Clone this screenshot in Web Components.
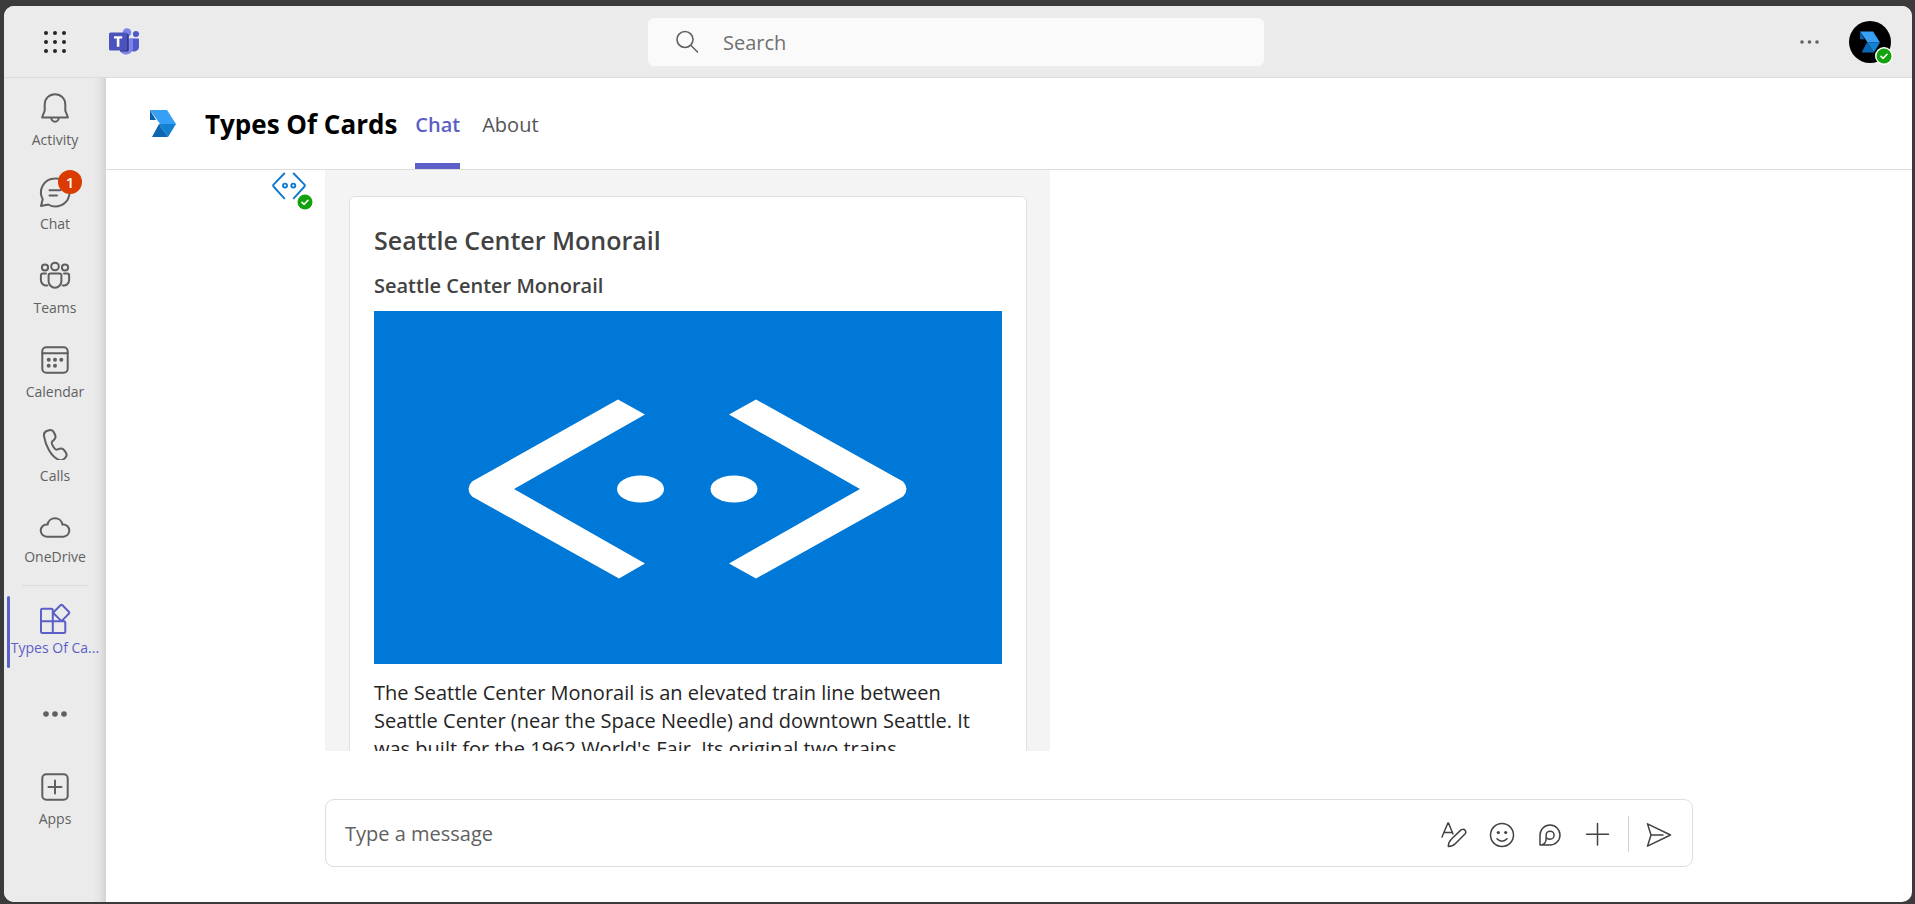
<!DOCTYPE html>
<html lang="en">
<head>
<meta charset="utf-8">
<title>Types Of Cards</title>
<style>
  html, body { margin: 0; height: 100%; }
  body { font-family: "Open Sans", "Noto Sans", sans-serif; color: #242424; background: #3b3b3b; }
</style>
</head>
<body>
<teams-shell>
  <top-bar slot="top"></top-bar>
  <side-rail slot="rail">
    <rail-item icon="bell">Activity</rail-item>
    <rail-item icon="chat" badge="1">Chat</rail-item>
    <rail-item icon="people">Teams</rail-item>
    <rail-item icon="calendar">Calendar</rail-item>
    <rail-item icon="phone">Calls</rail-item>
    <rail-item icon="cloud" compact>OneDrive</rail-item>
    <rail-item icon="tiles" active compact>Types Of Ca...</rail-item>
    <rail-more></rail-more>
    <rail-item icon="apps">Apps</rail-item>
  </side-rail>
  <app-header heading="Types Of Cards">
    <tab-link selected>Chat</tab-link>
    <tab-link>About</tab-link>
  </app-header>
  <chat-thread>
    <hero-card heading="Seattle Center Monorail" subheading="Seattle Center Monorail">The Seattle Center Monorail is an elevated train line between Seattle Center (near the Space Needle) and downtown Seattle. It was built for the 1962 World's Fair. Its original two trains</hero-card>
  </chat-thread>
  <message-composer></message-composer>
</teams-shell>

<script>
const ARROW = '<path d="M0 0h17l9 14H10z" fill="#37a0f4"/><path d="M0 0v10h6z" fill="#0b60a8"/><path d="M9 14h17l-8 13z" fill="#1380d2"/><path d="M9 14 2 27h16z" fill="#0c67b3"/>';
const ICONS = {
  waffle: [24, 24, [3, 12, 21].map(y => [3, 12, 21].map(x => `<circle cx="${x}" cy="${y}" r="2" fill="#242424"/>`).join('')).join('')],
  teams: [30, 27, '<circle cx="18" cy="4.500" r="4.300" fill="#7b83eb"/><circle cx="27" cy="6" r="3.100" fill="#5059c9"/><path d="M21 10.500h8.200c.5 0 .8.300.8.800v7.200a5 5 0 0 1-9 3z" fill="#5059c9"/><path d="M11 10.500h12.200c.5 0 .8.300.8.800V20a7 7 0 0 1-13 3z" fill="#7b83eb"/><path d="M18 5.500c1 0 1.800.8 1.800 1.800V22c0 .8-.7 1.500-1.500 1.500h-7.200L11 7z" fill="#37398a"/><rect y="4.500" width="18" height="18" rx="1.600" fill="#4b53bc"/><path d="M5 8.300h8.200v2.300h-2.800v8.200H7.800v-8.200H5z" fill="#fff"/>'],
  search: [24, 24, '<g fill="none" stroke="#616161" stroke-width="1.600" stroke-linecap="round"><circle cx="10" cy="9.500" r="8"/><path d="m15.800 15.200 6.700 6.800"/></g>'],
  dots: [20, 6, '<g fill="#616161"><circle cx="3" cy="3" r="1.800"/><circle cx="10.500" cy="3" r="1.800"/><circle cx="18" cy="3" r="1.800"/></g>'],
  more: [26, 6, '<g fill="#5f5f5f" stroke="none"><circle cx="4" cy="3" r="2.800"/><circle cx="13" cy="3" r="2.800"/><circle cx="22" cy="3" r="2.800"/></g>'],
  arrow: [26, 27, ARROW],
  bell: [32, 32, '<path d="M16 2.200c-5.800 0-10.300 4.500-10.300 10.200v6.300L3.200 25v.6h25.600V25l-2.500-6.300v-6.300C26.300 6.700 21.800 2.200 16 2.200zM12.300 26a3.700 3.700 0 0 0 7.400 0"/>'],
  chat: [32, 32, '<path d="M16 2.500a14 14 0 0 0-12.300 20.700L2 30l7.300-1.500A14 14 0 1 0 16 2.500zM10.500 14.200h11M10.500 19.500h7.500"/>'],
  people: [32, 32, '<circle cx="16" cy="6.500" r="3.800"/><circle cx="6" cy="7.500" r="3.100"/><circle cx="26" cy="7.500" r="3.100"/><path d="M11.500 13.400h9c1.100 0 1.900.8 1.900 1.900v6a6.400 6.400 0 0 1-12.800 0v-6c0-1.100.8-1.900 1.900-1.900zM7 13.400H3.700c-1 0-1.800.8-1.800 1.800v5.100a5.300 5.300 0 0 0 6.500 5.100M25 13.400h3.300c1 0 1.800.8 1.800 1.800v5.100a5.300 5.300 0 0 1-6.500 5.100"/>'],
  calendar: [32, 32, '<rect x="3.300" y="3.300" width="25.400" height="25.400" rx="4"/><path d="M3.300 9.300h25.400"/><g fill="#5f5f5f" stroke="none"><circle cx="9.700" cy="15.700" r="2"/><circle cx="16" cy="15.700" r="2"/><circle cx="22.300" cy="15.700" r="2"/><circle cx="9.700" cy="21.700" r="2"/><circle cx="16" cy="21.700" r="2"/></g>'],
  phone: [32, 32, '<path d="m8.400 2.800 1.700-.5c2-.6 4 .3 4.900 2.200l1.100 2.500c.7 1.600.3 3.500-1 4.700l-2.100 2c-.9.900.3 3.300 1.200 4.900 1 1.700 2.400 3.300 3.600 3l2.800-.9c1.700-.5 3.500.1 4.500 1.500l1.600 2.200c1.200 1.700 1 4-.5 5.300l-1.200 1.200c-1.300 1.200-3.200 1.600-4.900 1-4.200-1.500-7.500-5.200-10.200-9.900C7.100 17.100 5.700 12.500 5 8.200c-.4-2.500 1-4.700 3.400-5.400z"/>'],
  cloud: [32, 32, '<path d="M8.600 12.500a7.500 7.500 0 0 1 14.800 0h.8a6.100 6.100 0 0 1 0 12.200H7.800a6.100 6.100 0 0 1 0-12.200z"/>'],
  tiles: [32, 32, '<path d="M13.800 18.300V7.200c0-.8-.6-1.400-1.400-1.400H3.400c-.8 0-1.400.6-1.400 1.400v21.500c0 .8.600 1.400 1.400 1.400h21.500c.8 0 1.400-.6 1.400-1.400v-9c0-.8-.6-1.400-1.400-1.400zM2 18.300h11.800v11.800M21.500 2.200l-6.500 6.500c-.6.600-.6 1.400 0 2l6.500 6.400c.6.600 1.400.6 2 0l6.300-6.400c.6-.6.600-1.400 0-2L23.500 2.200c-.6-.6-1.400-.6-2 0z"/>'],
  apps: [32, 32, '<rect x="3.300" y="3.300" width="25.400" height="25.400" rx="4"/><path d="M16 9.500v13M9.500 16h13"/>'],
  bot: [34, 28, '<g fill="none" stroke="#0f78cf" stroke-width="1.900"><path d="M12.300 1.500 1.500 12.700c-.5.600-.5 1.200 0 1.800l10.800 11.800M21.700 1.500l10.800 11.200c.5.600.5 1.200 0 1.800L21.700 26.300"/><circle cx="13" cy="13.600" r="2"/><circle cx="21.300" cy="13.600" r="2"/></g>'],
  check: [16, 16, '<circle cx="8" cy="8" r="7.500" fill="#13a10e"/><path d="m5 8.300 2.200 2L11 6.300" fill="none" stroke="#fff" stroke-width="1.600" stroke-linecap="round"/>'],
  format: [26, 26, '<path d="m1 15 5.900-14h.6l4.500 11M3 10.500h8.200M21 7.600a2.700 2.700 0 0 1 3.200 4.100L14.500 21.500c-1.900 1.900-4.500 3-7.200 3 0-2.700 1.100-5.300 3-7.200L20 7.900q.4-.3 1-.3z"/>'],
  smile: [26, 26, '<circle cx="13" cy="13" r="11.500"/><path d="M8 16.800c2.800 3.100 7.200 3.100 10 0"/><g fill="#424242" stroke="none"><circle cx="9.300" cy="10.500" r="1.600"/><circle cx="16.700" cy="10.500" r="1.600"/></g>'],
  loop: [26, 26, '<path d="M3 23V13A10 10 0 1 1 13 23zM5.500 22.500c2.500-.5 3.400-2.300 3.600-5.500v-3.800a4 4 0 1 1 4 4c-1.400 0-2.300-.4-2.900-.9"/>'],
  plus: [26, 26, '<path d="M12.500 1.500V23M1.500 12.200h22"/>'],
  send: [26, 26, '<path d="m1.500 1.800 23 11.200-23 11.200L5 13zM5 13h12"/>']
};

/* Registers an element whose shadow root is cloned from a template built by render(host). */
function element(name, render) {
  customElements.define(name, class extends HTMLElement {
    connectedCallback() {
      if (this.shadowRoot) return;
      const t = document.createElement('template');
      t.innerHTML = render(this);
      this.attachShadow({ mode: 'open' }).append(t.content.cloneNode(true));
    }
  });
}

element('ui-icon', el => {
  const [w, h, body] = ICONS[el.getAttribute('name')];
  return `<style>:host{display:block;flex:none;width:${w}px;height:${h}px}svg{display:block}</style>
  <svg width="${w}" height="${h}" viewBox="0 0 ${w} ${h}" aria-hidden="true" fill="none" stroke="none"><g style="stroke:var(--icon-stroke,none);stroke-width:var(--icon-weight,2);stroke-linejoin:round;stroke-linecap:round">${body}</g></svg>`;
});

element('teams-shell', () => `<style>
  :host{display:block;box-sizing:border-box;height:100vh;padding:6px 3px 2px 4px}
  .window{height:100%;display:grid;grid-template:72px minmax(0,1fr)/102px minmax(0,1fr);border-radius:10px;overflow:hidden;background:#fff}
  main{display:flex;flex-direction:column;min-width:0;min-height:0}
  </style><div class="window"><slot name="top"></slot><slot name="rail"></slot><main><slot></slot></main></div>`);

element('top-bar', () => `<style>
  :host{grid-column:1/-1;display:grid;grid-template-columns:minmax(0,1fr) minmax(0,616px) minmax(0,1fr);align-items:center;box-sizing:border-box;padding-right:4px;border-bottom:1px solid #dcdcdc;background:#ebebeb}
  button{display:block;padding:0;border:0;background:none}
  .start{display:flex;align-items:center;gap:42px;padding-left:39px}
  .end{display:flex;align-items:center;justify-content:flex-end;gap:30px;padding-right:17px}
  label{display:flex;align-items:center;gap:24px;height:48px;padding:0 0 0 27px;box-sizing:border-box;border-radius:6px;background:#fafafa}
  input{flex:1;min-width:0;padding:2px 0 0;border:0;outline:0;background:none;font:20px/28px "Open Sans",sans-serif}
  input::placeholder{color:#707070;opacity:1}
  .me{position:relative;display:grid;place-items:center;width:42px;height:42px;border-radius:50%;background:#000}
  .me svg{display:block}
  .status{position:absolute;right:-1px;bottom:-1px;border-radius:50%;background:#fff;box-shadow:0 0 0 1px #fff}
  </style>
  <div class="start"><button aria-label="App launcher"><ui-icon name="waffle"></ui-icon></button><ui-icon name="teams"></ui-icon></div>
  <label><ui-icon name="search"></ui-icon><input type="search" placeholder="Search" aria-label="Search"></label>
  <div class="end"><button aria-label="Settings and more"><ui-icon name="dots"></ui-icon></button>
  <button class="me" aria-label="Account"><svg width="20" height="22" viewBox="0 0 26 27">${ARROW}</svg><ui-icon class="status" name="check"></ui-icon></button></div>`);

element('side-rail', () => `<style>
  :host{display:block;min-height:0;overflow:hidden;background:linear-gradient(to left,#d3d3d3,#e3e3e3 6px,#ebebeb 14px)}
  nav{display:flex;flex-direction:column;padding-top:4px}
  </style><nav aria-label="Apps"><slot></slot></nav>`);

element('rail-item', el => {
  const active = el.hasAttribute('active');
  const badge = el.getAttribute('badge');
  return `<style>
  :host{display:block;height:84px;--icon-stroke:#5f5f5f;color:#616161}
  :host([compact]){--gap:3px}
  :host([active]){height:72px;margin-top:10px;--icon-stroke:#5b5fc7;color:#5b5fc7;--pad:7px}
  a{position:relative;display:flex;flex-direction:column;align-items:center;gap:var(--gap,6px);height:100%;box-sizing:border-box;padding-top:var(--pad,10px);color:inherit;text-decoration:none;font-size:14px;line-height:20px;white-space:nowrap}
  .bar{position:absolute;left:3px;top:0;bottom:0;width:3px;border-radius:2px;background:#5b5fc7}
  .badge{position:absolute;left:54px;top:4px;width:24px;height:24px;border-radius:50%;background:#da3b01;color:#fff;font-size:15px;font-weight:600;line-height:24px;text-align:center}
  hr{width:66px;margin:-1px auto 0;border:0;border-top:1px solid #dcdcdc}
  </style><a href="#">${active ? '<span class="bar"></span>' : ''}<ui-icon name="${el.getAttribute('icon')}"></ui-icon>${badge ? `<span class="badge">${badge}</span>` : ''}<span><slot></slot></span></a>${el.getAttribute('icon') === 'cloud' ? '<hr>' : ''}`;
});

element('rail-more', () => `<style>
  :host{display:block;margin:26px 0 27px}
  button{display:grid;place-items:center;width:100%;height:40px;padding:0;border:0;background:none}
  </style><button aria-label="More apps"><ui-icon name="more"></ui-icon></button>`);

element('app-header', el => `<style>
  :host{flex:none;display:flex;height:91px;border-bottom:1px solid #dcdcdc;align-items:center;padding-left:44px}
  h1{margin:0 18px 0 29px;font-size:26px;line-height:36px;font-weight:700;color:#000;white-space:nowrap}
  nav{display:flex;gap:22px;align-self:stretch}
  </style><ui-icon name="arrow"></ui-icon><h1>${el.getAttribute('heading')}</h1><nav><slot></slot></nav>`);

element('tab-link', () => `<style>
  :host{display:flex}
  a{display:flex;align-items:center;box-sizing:border-box;border:solid transparent;border-width:8px 0 6px;color:#545454;font-size:20px;line-height:28px;text-decoration:none}
  :host([selected]) a{color:#5b5fc7;font-weight:600;border-bottom-color:#5b5fc7}
  </style><a href="#"><slot></slot></a>`);

element('chat-thread', () => `<style>
  :host{flex:1;min-height:0;overflow:hidden;display:grid;grid-template-columns:minmax(54px,1fr) minmax(0,1368px) minmax(0,1fr)}
  .bot{position:relative;justify-self:end;align-self:start;padding:2px 19px 0 0}
  .bot .status{position:absolute;right:12px;top:24px}
  .bubble{box-sizing:border-box;max-width:725px;padding:26px 23px 26px 24px;background:#f4f4f4}
  </style><div class="bot"><ui-icon name="bot"></ui-icon><ui-icon class="status" name="check"></ui-icon></div><div class="bubble"><slot></slot></div>`);

element('hero-card', el => `<style>
  :host{display:block;border:1px solid #e0e0e0;border-radius:6px;background:#fff;padding:25px 24px}
  h2,h3,p{margin:0}
  h2{font-size:25px;line-height:36px;font-weight:600;color:#424242}
  h3{margin-top:14px;font-size:20px;line-height:28px;font-weight:600;color:#424242}
  svg{display:block;width:100%;margin:11px 0 15px}
  p{font-size:20px;line-height:28px;color:#242424}
  </style><h2>${el.getAttribute('heading')}</h2><h3>${el.getAttribute('subheading')}</h3>
  <svg viewBox="0 0 628 353" role="img" aria-label="Bot Framework logo"><rect width="628" height="353" fill="#0078d7"/>
  <g fill="#fff"><path d="m244 88.500 27 15-131 74.500 131 74.500-26 15L98 185.500q-7-7.500 0-15z"/><path d="m382 88.500-27 15 131 74.500-131 74.500 27 15 147-82q7-7.500 0-15z"/><ellipse cx="266.500" cy="178" rx="23.500" ry="13.500"/><ellipse cx="360" cy="178" rx="23.500" ry="13.500"/></g></svg>
  <p><slot></slot></p>`);

element('message-composer', () => `<style>
  :host{flex:none;display:grid;grid-template-columns:minmax(54px,1fr) minmax(0,1368px) minmax(0,1fr);padding:48px 0 35px;--icon-stroke:#424242;--icon-weight:1.5}
  form{grid-column:2;display:flex;align-items:center;box-sizing:border-box;height:68px;padding:2px 20px 0 19px;border:1px solid #dedede;border-radius:9px}
  input{flex:1;min-width:0;padding:0;border:0;outline:0;background:none;font:20px/28px "Open Sans",sans-serif}
  input::placeholder{color:#616161;opacity:1}
  .tools{display:flex;gap:22px}
  button{display:block;padding:0;border:0;background:none}
  button ui-icon{padding-top:2px}
  .rule{width:1px;height:36px;margin:0 17px;background:#d1d1d1}
  </style><form><input placeholder="Type a message" aria-label="Type a message">
  <div class="tools"><button type="button" aria-label="Format"><ui-icon name="format"></ui-icon></button><button type="button" aria-label="Emoji"><ui-icon name="smile"></ui-icon></button><button type="button" aria-label="Loop components"><ui-icon name="loop"></ui-icon></button><button type="button" aria-label="Actions and apps"><ui-icon name="plus"></ui-icon></button></div>
  <span class="rule"></span><button type="button" aria-label="Send"><ui-icon name="send"></ui-icon></button></form>`);
</script>
</body>
</html>
